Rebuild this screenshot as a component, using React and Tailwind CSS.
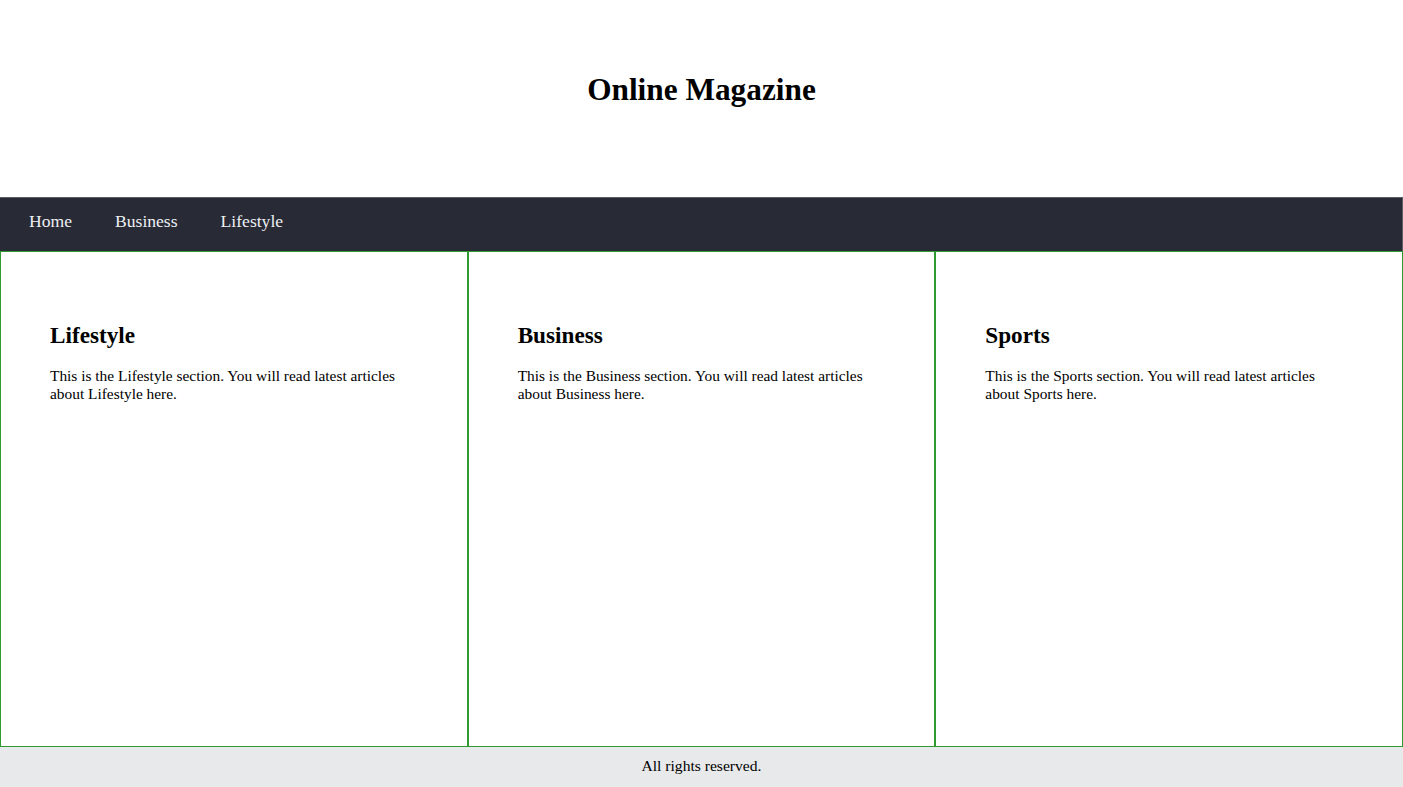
const sections = [
  { id: 'lifestyle', title: 'Lifestyle' },
  { id: 'business', title: 'Business' },
  { id: 'sports', title: 'Sports' },
];

const links = ['Home', 'Business', 'Lifestyle'];

export default function App() {
  return (
    <div className="min-h-[787px] bg-white text-black font-['Liberation_Serif',serif]">
      <header className="h-[197px] pt-[71px] text-center">
        <h1 className="text-[31.3px] font-bold leading-[37px]">Online Magazine</h1>
      </header>

      <nav className="h-[54px] bg-[#282a36] border-t border-r border-[#5a5c66] flex items-center pl-[29px] pb-[6px] gap-[43px]">
        {links.map((link) => (
          <a key={link} href="#" className="text-[17.6px] text-[#eef0f4]">
            {link}
          </a>
        ))}
      </nav>

      <main className="grid grid-cols-3">
        {sections.map((section) => (
          <section
            key={section.id}
            className="h-[496px] border border-[#2f9a2f] pl-[49px] pr-[56px] pt-[70px]"
          >
            <h2 className="text-[23.2px] font-bold leading-[27px]">{section.title}</h2>
            <p className="mt-[18px] text-[15.4px] leading-[18px]">
              This is the {section.title} section. You will read latest articles about {section.title} here.
            </p>
          </section>
        ))}
      </main>

      <footer className="h-[40px] bg-[#e8e9ea] flex items-center justify-center pb-[2px] text-[15.6px]">
        All rights reserved.
      </footer>
    </div>
  );
}
